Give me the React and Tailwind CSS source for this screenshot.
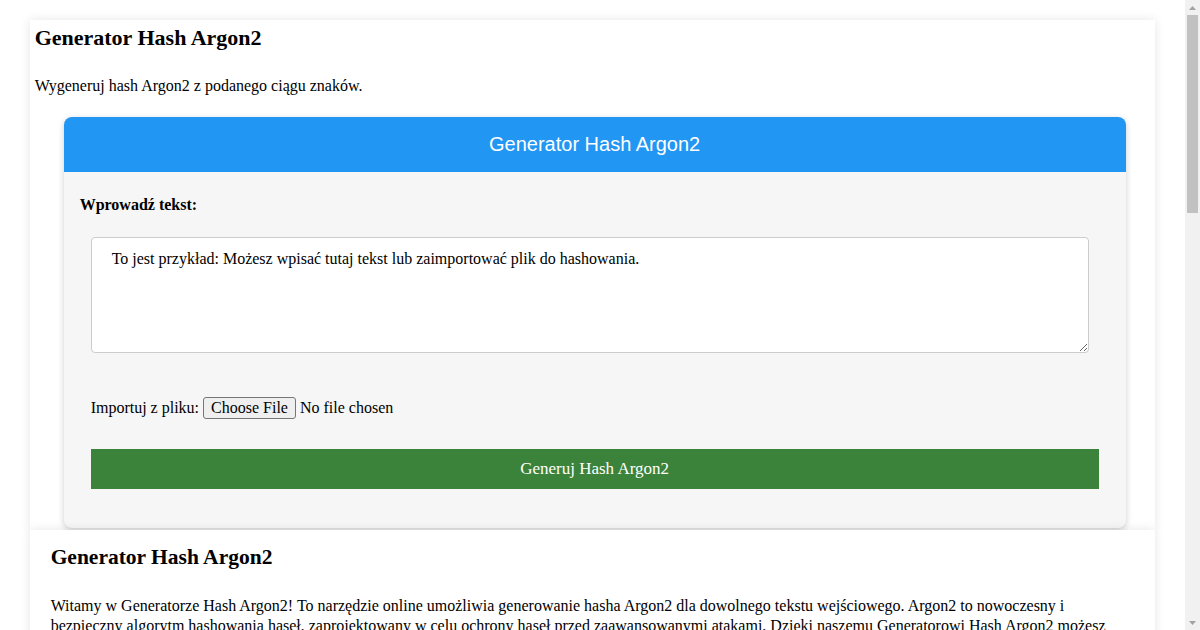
import { useState } from 'react'

// Argon2 hash generator page — tool card on top, article text below,
// with the browser's scrollbar drawn on the right edge

const sections = [
  {
    title: 'Czym jest Argon2?',
    body: [
      'Argon2 to funkcja wyprowadzania klucza, która zwyciężyła w konkursie Password Hashing Competition w 2015 roku. Została zaprojektowana przez Alexa Biryukova, Daniela Dinu i Dmitrija Khovratovicha z Uniwersytetu Luksemburskiego. Algorytm jest odporny na ataki z użyciem GPU oraz układów ASIC, ponieważ wymaga dużej ilości pamięci.',
      'Istnieją trzy warianty algorytmu: Argon2d, Argon2i oraz Argon2id. Argon2d maksymalizuje odporność na ataki z użyciem GPU, Argon2i jest zoptymalizowany pod kątem odporności na ataki kanałem bocznym, a Argon2id łączy zalety obu tych wariantów.',
    ],
  },
  {
    title: 'Jak korzystać z generatora?',
    list: [
      'Wpisz tekst, który chcesz zahashować, w polu tekstowym powyżej.',
      'Opcjonalnie zaimportuj plik tekstowy za pomocą przycisku „Choose File”.',
      'Kliknij przycisk „Generuj Hash Argon2”, aby otrzymać wynik.',
      'Skopiuj wygenerowany hash i użyj go w swojej aplikacji.',
    ],
  },
  {
    title: 'Parametry algorytmu',
    body: [
      'Bezpieczeństwo hasha Argon2 zależy od kilku parametrów: kosztu pamięci (memory cost), liczby iteracji (time cost) oraz stopnia równoległości (parallelism). Im wyższe wartości tych parametrów, tym trudniej przeprowadzić atak siłowy, ale tym dłużej trwa również obliczanie hasha.',
    ],
  },
]

function Scrollbar() {
  return (
    <aside className="flex w-[15px] shrink-0 flex-col bg-[#f1f1f1]">
      <div className="flex h-[15px] items-center justify-center">
        <svg width="7" height="4" viewBox="0 0 7 4"><polygon points="3.5,0 7,4 0,4" fill="#a3a3a3" /></svg>
      </div>
      <div className="mx-[2px] h-[198px] bg-[#c1c1c1]" />
      <div className="flex-1" />
      <div className="flex h-[15px] items-center justify-center">
        <svg width="7" height="4" viewBox="0 0 7 4"><polygon points="0,0 7,0 3.5,4" fill="#a3a3a3" /></svg>
      </div>
    </aside>
  )
}

export default function App() {
  const [text, setText] = useState(
    'To jest przykład: Możesz wpisać tutaj tekst lub zaimportować plik do hashowania.'
  )

  return (
    <div className="flex h-screen bg-white font-['Liberation_Serif',serif] text-black">
      <main className="min-w-0 flex-1 overflow-hidden pt-5 pb-5">

        {/* ── Tool container ─────────────────────────────────────── */}
        <div className="mx-auto w-[95%] bg-white px-[5px] pt-[4px] pb-[2px] shadow-[0_0_10px_rgba(0,0,0,0.1)]">
          <h1 className="text-[22px] font-bold leading-[27px]">Generator Hash Argon2</h1>
          <p className="mt-[26px] text-[16px] leading-[18px]">
            Wygeneruj hash Argon2 z podanego ciągu znaków.
          </p>

          <div className="mt-[22px] ml-[29px] w-[1062px] overflow-hidden rounded-[8px] bg-[#f6f6f6] shadow-[0_2px_6px_rgba(0,0,0,0.2)]">
            <div className="flex h-[55px] items-center justify-center bg-[#2196f3] pb-[1px] font-['Liberation_Sans',Arial,sans-serif] text-[20px] text-white">
              Generator Hash Argon2
            </div>

            <div className="px-4 pt-[24px] pb-[39px]">
              <label className="block text-[16px] font-bold leading-[18px]">Wprowadź tekst:</label>

              <textarea
                value={text}
                onChange={(e) => setText(e.target.value)}
                className="mt-[23px] ml-[11px] block h-[116px] w-[998px] rounded-[4px] border border-[#cccccc] bg-white px-[20px] pt-[12px] text-[16px] leading-[18px] outline-none"
              />

              <div className="mt-[43px] ml-[11px] flex h-[23px] items-center text-[16px] leading-[18px]">
                <span>Importuj z pliku:&nbsp;</span>
                <input
                  type="file"
                  className="text-[16px] leading-[18px] file:mr-[4px] file:rounded-[3px] file:border file:border-[#767676] file:bg-[#efefef] file:px-[7px] file:py-[1px] file:text-black"
                />
              </div>

              <button className="mt-[30px] ml-[11px] block h-[40px] w-[1008px] bg-[#3b833a] text-[17px] text-white">
                Generuj Hash Argon2
              </button>
            </div>
          </div>
        </div>

        {/* ── Article ────────────────────────────────────────────── */}
        <div className="mx-auto w-[95%] bg-white px-[21px] pt-[14px] pb-8 shadow-[0_0_10px_rgba(0,0,0,0.1)]">
          <h2 className="text-[21.5px] font-bold leading-[26px]">Generator Hash Argon2</h2>
          <p className="mt-[26px] text-[16px] leading-[20px]">
            Witamy w Generatorze Hash Argon2! To narzędzie online umożliwia generowanie hasha Argon2 dla dowolnego tekstu wejściowego. Argon2 to nowoczesny i bezpieczny algorytm hashowania haseł, zaprojektowany w celu ochrony haseł przed zaawansowanymi atakami. Dzięki naszemu Generatorowi Hash Argon2 możesz szybko i łatwo wygenerować bezpieczny hash dla swoich haseł lub innych danych, bez konieczności instalowania dodatkowego oprogramowania.
          </p>

          {sections.map((s) => (
            <div key={s.title} className="mt-[24px]">
              <h3 className="text-[18px] font-bold leading-[22px]">{s.title}</h3>
              {s.body &&
                s.body.map((t, i) => (
                  <p key={i} className="mt-[16px] text-[16px] leading-[20px]">{t}</p>
                ))}
              {s.list && (
                <ol className="mt-[16px] list-decimal pl-10 text-[16px] leading-[20px]">
                  {s.list.map((t) => (
                    <li key={t} className="mt-1">{t}</li>
                  ))}
                </ol>
              )}
            </div>
          ))}
        </div>
      </main>

      <Scrollbar />
    </div>
  )
}
